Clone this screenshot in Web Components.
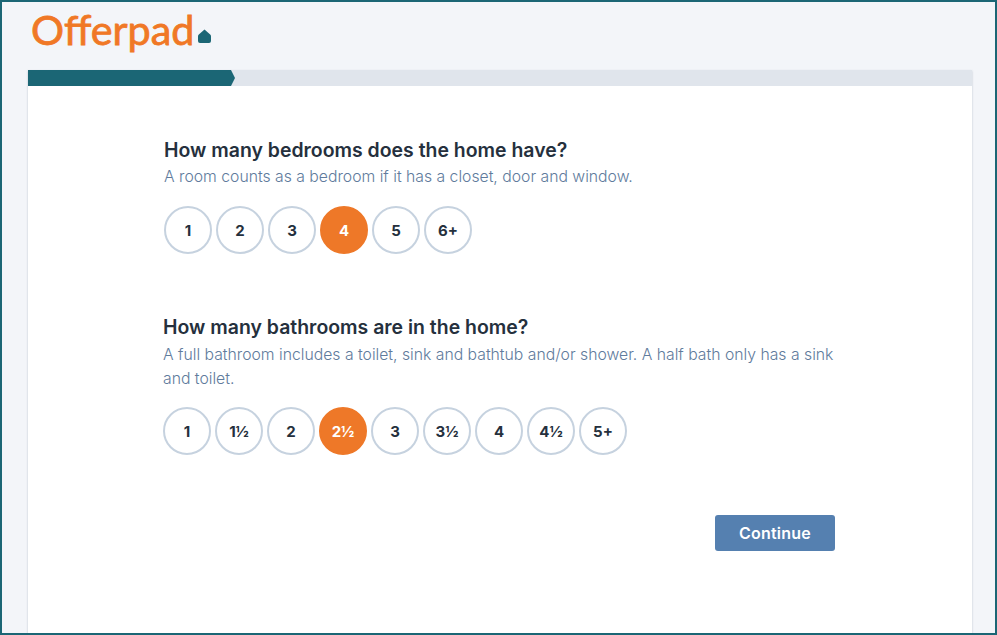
<!DOCTYPE html>
<html>
<head>
<meta charset="utf-8">
<style>
    html, body { margin: 0; padding: 0; height: 100%; }
    body { font-family: "Inter", "Liberation Sans", sans-serif; overflow: hidden; }
</style>
</head>
<body>
<offer-page>
    <offer-logo slot="logo"></offer-logo>
    <offer-card slot="card">
        <offer-question title="How many bedrooms does the home have?" options="1,2,3,4,5,6+" selected="4">
            A room counts as a bedroom if it has a closet, door and window.
        </offer-question>
        <offer-question class="second" title="How many bathrooms are in the home?" options="1,1½,2,2½,3,3½,4,4½,5+" selected="2½">
            A full bathroom includes a toilet, sink and bathtub and/or shower. A half bath only has a sink and toilet.
        </offer-question>
        <offer-button>Continue</offer-button>
    </offer-card>
</offer-page>
<script>
class OfferPage extends HTMLElement {
    constructor() {
        super();
        this.attachShadow({ mode: "open" }).innerHTML = `
            <style>
                :host {
                    display: flex;
                    flex-direction: column;
                    box-sizing: border-box;
                    height: 635px;
                    border: 2px solid #1b6675;
                    background: #f3f5f9;
                    overflow: hidden;
                }
                header { height: 65px; padding: 3px 0 0 29px; flex: none; }
                main { flex: 1; padding: 0 23px 0 26px; min-height: 0; }
            </style>
            <header><slot name="logo"></slot></header>
            <main><slot name="card"></slot></main>
        `;
    }
}

class OfferLogo extends HTMLElement {
    constructor() {
        super();
        this.attachShadow({ mode: "open" }).innerHTML = `
            <style>
                :host { display: inline-flex; align-items: flex-start; height: 52px; }
                span {
                    font: 400 41.3px/48px "Lato", "Liberation Sans", sans-serif;
                    color: #f07826;
                    -webkit-text-stroke: 0.8px #f07826;
                }
                svg { width: 13px; height: 14px; margin: 24px 0 0 4px; }
            </style>
            <span>Offerpad</span>
            <svg viewBox="0 0 13 14"><path d="M6.5 0.5 L12.2 5.5 Q13 6.2 13 7.5 V12 Q13 14 11 14 H2 Q0 14 0 12 V7.5 Q0 6.2 0.8 5.5 Z" fill="#1b6675"/></svg>
        `;
    }
}

class OfferCard extends HTMLElement {
    constructor() {
        super();
        this.attachShadow({ mode: "open" }).innerHTML = `
            <style>
                :host {
                    display: block;
                    height: 100%;
                    background: #fff;
                    box-shadow: 0 1px 2px rgba(60, 80, 110, .3);
                }
                .progress { height: 16px; background: #e0e5ec; display: flex; }
                .fill {
                    width: 207px;
                    background: #1b6675;
                    clip-path: polygon(0 0, 203px 0, 207px 50%, 203px 100%, 0 100%);
                }
                .body { padding: 51px 137px 0 136px; }
            </style>
            <div class="progress"><div class="fill"></div></div>
            <div class="body"><slot></slot></div>
        `;
    }
}

class OfferQuestion extends HTMLElement {
    constructor() {
        super();
        const shadow = this.attachShadow({ mode: "open" });
        const selected = this.getAttribute("selected");
        const options = this.getAttribute("options").split(",");
        shadow.innerHTML = `
            <style>
                :host { display: block; color: #25303d; }
                :host(.second) { margin: 60px 0 0 -1px; }
                h2 { margin: 0; font-size: 19.45px; line-height: 26px; font-weight: 600; }
                p { margin: 2px 0 0; font-size: 15.75px; line-height: 24px; color: #607b9c; font-weight: 300; }
                :host(.second) p { margin-top: 3px; }
                .options { display: flex; gap: 4px; margin-top: 17px; }
                :host(.second) .options { margin-top: 16px; }
            </style>
            <h2></h2>
            <p><slot></slot></p>
            <div class="options"></div>
        `;
        shadow.querySelector("h2").textContent = this.getAttribute("title");
        this.removeAttribute("title");
        const row = shadow.querySelector(".options");
        options.forEach((o) => {
            const el = document.createElement("offer-option");
            el.textContent = o;
            if (o === selected) el.setAttribute("active", "");
            row.appendChild(el);
        });
    }
}

class OfferOption extends HTMLElement {
    constructor() {
        super();
        this.attachShadow({ mode: "open" }).innerHTML = `
            <style>
                :host {
                    display: flex;
                    align-items: center;
                    justify-content: center;
                    box-sizing: border-box;
                    width: 48px;
                    height: 48px;
                    border: 2px solid #c6d2df;
                    border-radius: 50%;
                    font-size: 15px;
                    font-weight: 700;
                    color: #25303d;
                }
                :host([active]) { background: #ee7828; border-color: #ee7828; color: #fff; }
            </style>
            <slot></slot>
        `;
    }
}

class OfferButton extends HTMLElement {
    constructor() {
        super();
        this.attachShadow({ mode: "open" }).innerHTML = `
            <style>
                :host { display: flex; justify-content: flex-end; margin-top: 60px; }
                button {
                    width: 120px;
                    height: 36px;
                    border: 0;
                    border-radius: 3px;
                    background: #5580b0;
                    color: #fff;
                    font: 600 16px "Inter", "Liberation Sans", sans-serif;
                    letter-spacing: .2px;
                    padding: 0;
                }
            </style>
            <button><slot></slot></button>
        `;
    }
}

customElements.define('offer-page', OfferPage);
customElements.define('offer-logo', OfferLogo);
customElements.define('offer-card', OfferCard);
customElements.define('offer-option', OfferOption);
customElements.define('offer-question', OfferQuestion);
customElements.define('offer-button', OfferButton);
</script>
</body>
</html>
